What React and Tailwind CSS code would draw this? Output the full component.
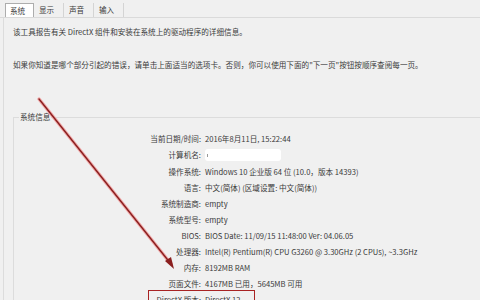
import React from 'react';

const rows = [
    ['当前日期/时间:', '2016年8月11日, 15:22:44'],
    ['计算机名:', null],
    ['操作系统:', 'Windows 10 企业版 64 位 (10.0，版本 14393)'],
    ['语言:', '中文(简体) (区域设置: 中文(简体))'],
    ['系统制造商:', 'empty'],
    ['系统型号:', 'empty'],
    ['BIOS:', 'BIOS Date: 11/09/15 11:48:00 Ver: 04.06.05'],
    ['处理器:', 'Intel(R) Pentium(R) CPU G3260 @ 3.30GHz (2 CPUs), ~3.3GHz'],
    ['内存:', '8192MB RAM'],
    ['页面文件:', '4167MB 已用，5645MB 可用'],
    ['DirectX 版本:', 'DirectX 12'],
];

const Tab = ({ label, active }) => (
    <div
        className={`h-[14px] flex items-center text-[7.6px] ${
            active
                ? 'bg-white border border-[#adadad] border-b-0 w-[29px] pl-[4px]'
                : 'border-r border-[#d4d4d4] w-[30px] pl-[5px]'
        }`}
    >
        {label}
    </div>
);

export default function App() {
    return (
        <div
            className="relative w-[480px] h-[300px] overflow-hidden bg-[#f0f0f0] text-[#3a3a3a]"
            style={{ fontFamily: '"Noto Sans CJK SC", "Noto Sans", sans-serif' }}
        >
            <div className="flex items-end h-[18px] pl-[5px] pt-[4px] border-b border-[#dadada]">
                <Tab label="系统" active />
                <Tab label="显示" />
                <Tab label="声音" />
                <Tab label="输入" />
            </div>

            <div className="ml-[3px] h-[282px] border-l border-[#dcdcdc] pl-[9px] pt-[9px]">
                <p className="text-[7.6px] leading-[10px]">
                    该工具报告有关 DirectX 组件和安装在系统上的驱动程序的详细信息。
                </p>
                <p className="text-[7.6px] leading-[10px] mt-[23px]">
                    如果你知道是哪个部分引起的错误，请单击上面适当的选项卡。否则，你可以使用下面的"下一页"按钮按顺序查阅每一页。
                </p>

                <fieldset className="mt-[42px] border border-r-0 border-[#dcdcdc] pl-[2px] pt-[9px] min-w-0 -mr-px">
                    <legend className="text-[7.6px] leading-[10px] ml-[3px] px-[1px]">系统信息</legend>
                    <div className="flex flex-col">
                        {rows.map(([label, value]) => (
                            <div key={label} className="flex h-[16.1px] items-center text-[7.6px]">
                                <span className="w-[186px] text-right pr-[1px]">{label}</span>
                                {value ? (
                                    <span className="pl-[3px] whitespace-nowrap">{value}</span>
                                ) : (
                                    <span className="ml-[3px] flex items-center h-[12px] w-[76px] bg-white rounded-[3px] blur-[0.6px]">
                                        <span className="ml-[2px] w-[1px] h-[3px] bg-[#999]" />
                                    </span>
                                )}
                            </div>
                        ))}
                    </div>
                </fieldset>
            </div>

            <div className="absolute left-[148px] top-[290px] w-[107px] h-[20px] border-[1.5px] border-[#a82323]" />

            <svg className="absolute inset-0 pointer-events-none" width="480" height="300" viewBox="0 0 480 300">
                <line x1="39" y1="99" x2="171" y2="264" stroke="#f0a8a8" strokeWidth="3.5" strokeLinecap="round" />
                <line x1="39" y1="99" x2="171" y2="264" stroke="#8a1f1f" strokeWidth="1.4" strokeLinecap="round" />
                <polygon points="174,269 165,261 171,257" fill="#8a1f1f" />
            </svg>
        </div>
    );
}
